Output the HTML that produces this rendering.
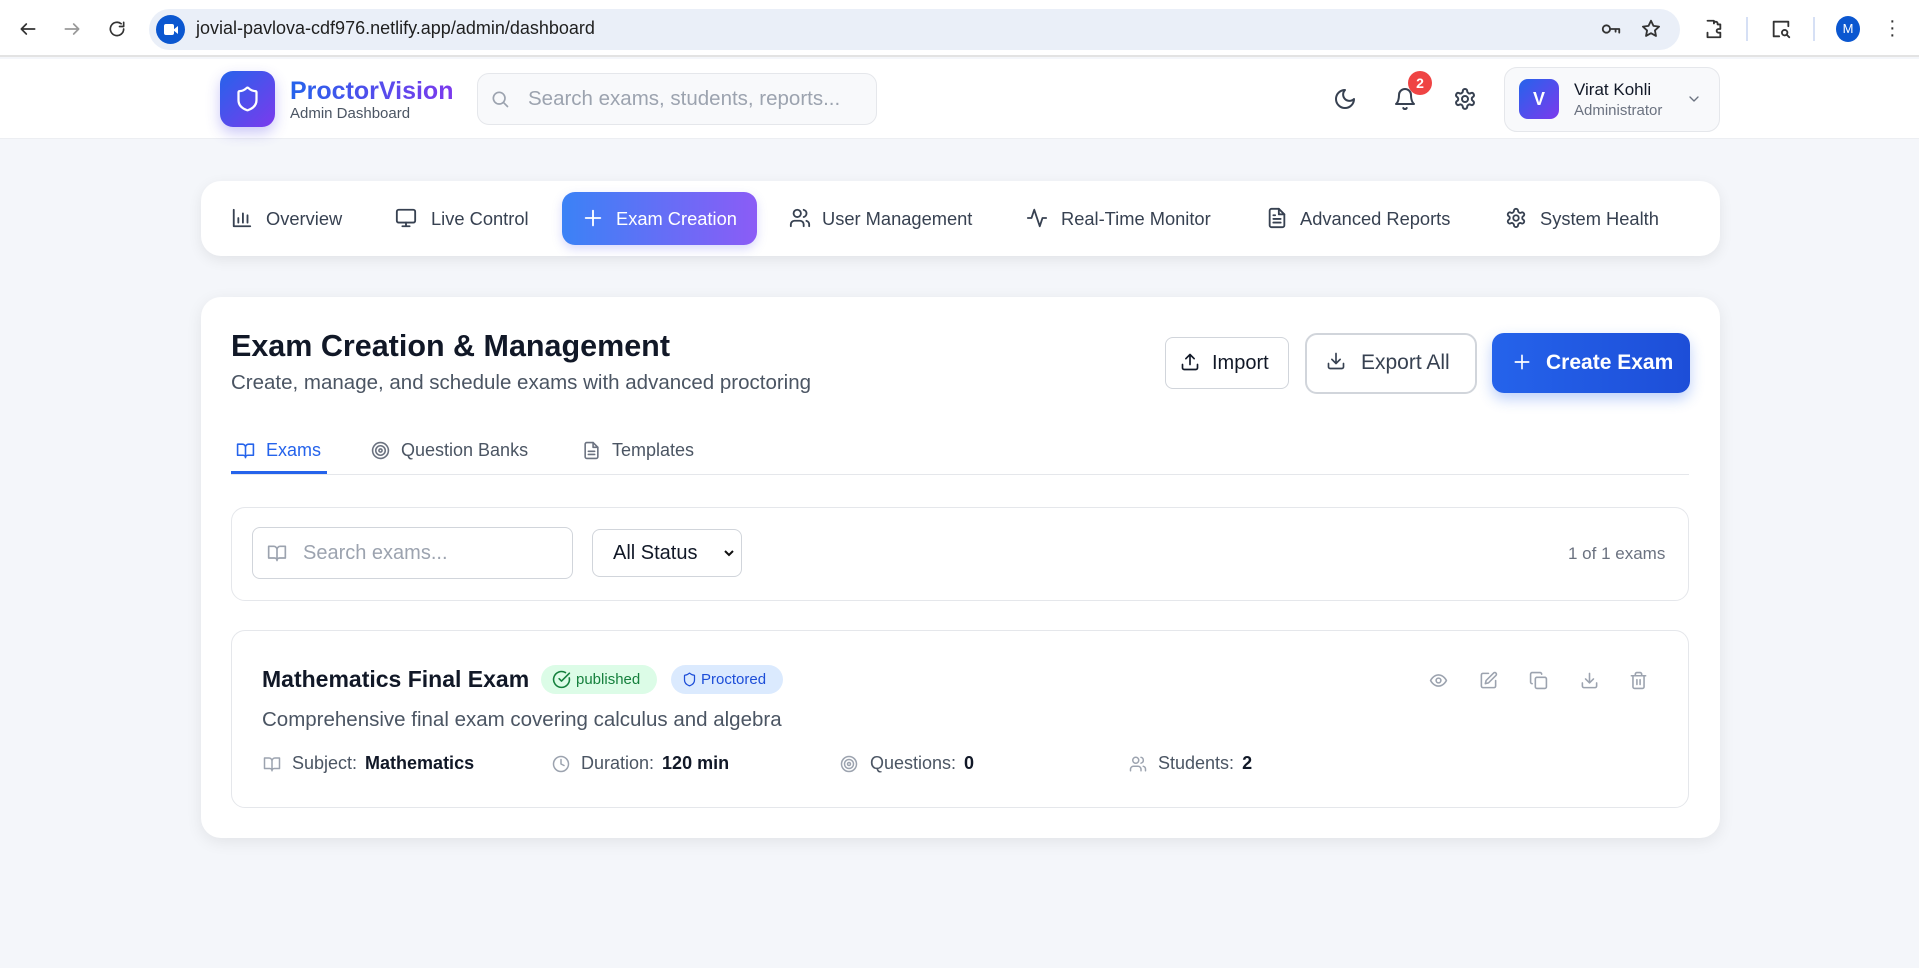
<!DOCTYPE html>
<html><head><meta charset="utf-8"><style>
*{box-sizing:border-box;margin:0;padding:0}
body{width:1919px;height:968px;overflow:hidden;background:#f4f6fa;font-family:"Liberation Sans",sans-serif;position:relative;color:#111827}
.a{position:absolute}
svg{display:block}
.ic{fill:none;stroke:currentColor;stroke-width:2;stroke-linecap:round;stroke-linejoin:round}
.nav span{position:absolute;font-size:18.3px;color:#374151;top:208px}
.nav svg{position:absolute;top:207px;color:#374151}
.meta{position:absolute;top:753px;font-size:18px;color:#4b5563}
.meta b{font-weight:bold;color:#111827;margin-left:8px}
</style></head><body>
<!-- chrome -->
<div class="a" style="left:0;top:0;width:1919px;height:57px;background:#fff;border-bottom:2px solid #e3e3e3"></div>
<svg class="a ic" style="left:18px;top:19px;color:#333" width="20" height="20" viewBox="0 0 24 24"><path d="M20 12H4M10 6l-6 6 6 6"/></svg>
<svg class="a ic" style="left:62px;top:19px;color:#999" width="20" height="20" viewBox="0 0 24 24"><path d="M4 12h16M14 6l6 6-6 6"/></svg>
<svg class="a ic" style="left:107px;top:19px;color:#333" width="20" height="20" viewBox="0 0 24 24"><path d="M20 12a8 8 0 1 1-3-6.3M20 4v5h-5"/></svg>
<div class="a" style="left:149px;top:9px;width:1531px;height:41px;border-radius:21px;background:#eaeff8"></div>
<div class="a" style="left:156px;top:15px;width:29px;height:29px;border-radius:50%;background:#0b57d0"></div>
<div class="a" style="left:164px;top:24px;width:10px;height:11px;background:#fff;border-radius:2px"></div>
<div class="a" style="left:173px;top:26px;width:0;height:0;border-top:4px solid transparent;border-bottom:4px solid transparent;border-right:5px solid #fff"></div>
<div class="a" style="left:196px;top:18px;font-size:18px;color:#1f1f1f">jovial-pavlova-cdf976.netlify.app/admin/dashboard</div>
<svg class="a ic" style="left:1600px;top:18px;color:#333" width="22" height="22" viewBox="0 0 24 24"><circle cx="7" cy="12" r="4"/><path d="M11 12h10v4M17 12v3"/></svg>
<svg class="a ic" style="left:1640px;top:18px;color:#333" width="22" height="22" viewBox="0 0 24 24"><path d="M12 3l2.7 5.6 6.1.8-4.5 4.2 1.1 6-5.4-3-5.4 3 1.1-6L3.2 9.4l6.1-.8z"/></svg>
<svg class="a ic" style="left:1702px;top:17px;color:#333" width="22" height="24" viewBox="0 0 24 24"><path d="M6 3h7v3a2 2 0 0 1 4 0v1h3v5h-2a2 2 0 0 0 0 4h2v5H6v-5"/></svg>
<div class="a" style="left:1746px;top:17px;width:2px;height:24px;background:#d6e0f5"></div>
<svg class="a ic" style="left:1770px;top:17px;color:#333" width="22" height="24" viewBox="0 0 24 24"><path d="M20 9V4H4v16h6"/><circle cx="16" cy="16" r="3"/><path d="M18 18l3 3"/></svg>
<div class="a" style="left:1813px;top:17px;width:2px;height:24px;background:#d6e0f5"></div>
<div class="a" style="left:1836px;top:16px;width:24px;height:26px;border-radius:50%;background:#0b57d0;color:#fff;font-size:13px;text-align:center;line-height:26px">M</div>
<div class="a" style="left:1889px;top:18px;width:4px;line-height:7px;font-size:20px;color:#333">·<br>·<br>·</div>
<!-- header -->
<div class="a" style="left:0;top:59px;width:1919px;height:80px;background:#fff;border-bottom:1px solid #eceef2"></div>
<div class="a" style="left:220px;top:71px;width:55px;height:56px;border-radius:13px;background:linear-gradient(135deg,#2563eb,#7c3aed);box-shadow:0 6px 14px rgba(79,70,229,.3)"></div>
<svg class="a ic" style="left:234px;top:85px;color:#fff" width="27" height="28" viewBox="0 0 24 24"><path d="M20 13c0 5-3.5 7.5-7.7 9a1 1 0 0 1-.6 0C7.5 20.5 4 18 4 13V6a1 1 0 0 1 1-1c2 0 4.5-1.2 6.2-2.7a1.2 1.2 0 0 1 1.6 0C14.5 3.8 17 5 19 5a1 1 0 0 1 1 1z"/></svg>
<div class="a" style="left:290px;top:77px;font-size:25px;font-weight:bold;background:linear-gradient(90deg,#2563eb,#7c3aed);-webkit-background-clip:text;color:transparent">ProctorVision</div>
<div class="a" style="left:290px;top:105px;font-size:15px;color:#4b5563">Admin Dashboard</div>
<div class="a" style="left:477px;top:73px;width:400px;height:52px;border-radius:12px;background:#f8f9fb;border:1px solid #e5e7eb"></div>
<svg class="a ic" style="left:490px;top:89px;color:#9ca3af" width="20" height="20" viewBox="0 0 24 24"><circle cx="11" cy="11" r="7"/><path d="M21 21l-4.3-4.3"/></svg>
<div class="a" style="left:528px;top:87px;font-size:20.5px;color:#9ca3af">Search exams, students, reports...</div>
<svg class="a ic" style="left:1333px;top:87px;color:#374151" width="24" height="24" viewBox="0 0 24 24"><path d="M12 3a6 6 0 0 0 9 9 9 9 0 1 1-9-9z"/></svg>
<svg class="a ic" style="left:1393px;top:87px;color:#374151" width="24" height="24" viewBox="0 0 24 24"><path d="M6 8a6 6 0 0 1 12 0c0 7 3 9 3 9H3s3-2 3-9M10.3 21a1.9 1.9 0 0 0 3.4 0"/></svg>
<div class="a" style="left:1408px;top:71px;width:24px;height:24px;border-radius:50%;background:#ef4444;color:#fff;font-size:14px;font-weight:bold;text-align:center;line-height:24px">2</div>
<svg class="a ic" style="left:1453px;top:87px;color:#374151" width="24" height="24" viewBox="0 0 24 24"><path d="M12.2 2h-.4a2 2 0 0 0-2 2v.2a2 2 0 0 1-1 1.7l-.4.3a2 2 0 0 1-2 0l-.2-.1a2 2 0 0 0-2.7.7l-.2.4a2 2 0 0 0 .7 2.7l.2.1a2 2 0 0 1 1 1.7v.5a2 2 0 0 1-1 1.7l-.2.1a2 2 0 0 0-.7 2.7l.2.4a2 2 0 0 0 2.7.7l.2-.1a2 2 0 0 1 2 0l.4.3a2 2 0 0 1 1 1.7v.2a2 2 0 0 0 2 2h.4a2 2 0 0 0 2-2v-.2a2 2 0 0 1 1-1.7l.4-.3a2 2 0 0 1 2 0l.2.1a2 2 0 0 0 2.7-.7l.2-.4a2 2 0 0 0-.7-2.7l-.2-.1a2 2 0 0 1-1-1.7v-.5a2 2 0 0 1 1-1.7l.2-.1a2 2 0 0 0 .7-2.7l-.2-.4a2 2 0 0 0-2.7-.7l-.2.1a2 2 0 0 1-2 0l-.4-.3a2 2 0 0 1-1-1.7V4a2 2 0 0 0-2-2z"/><circle cx="12" cy="12" r="3"/></svg>
<div class="a" style="left:1504px;top:67px;width:216px;height:65px;border-radius:13px;background:#f8f9fb;border:1px solid #e5e7eb"></div>
<div class="a" style="left:1519px;top:79px;width:40px;height:40px;border-radius:9px;background:linear-gradient(135deg,#2563eb,#7c3aed);color:#fff;font-weight:bold;font-size:18px;text-align:center;line-height:40px">V</div>
<div class="a" style="left:1574px;top:80px;font-size:17px;color:#111827">Virat Kohli</div>
<div class="a" style="left:1574px;top:102px;font-size:15px;color:#6b7280">Administrator</div>
<svg class="a ic" style="left:1686px;top:91px;color:#6b7280" width="16" height="16" viewBox="0 0 24 24"><path d="M6 9l6 6 6-6"/></svg>
<!-- nav -->
<div class="a" style="left:201px;top:181px;width:1519px;height:75px;border-radius:20px;background:#fff;box-shadow:0 4px 14px rgba(0,0,0,.08)"></div>
<div class="a" style="left:562px;top:192px;width:195px;height:53px;border-radius:13px;background:linear-gradient(90deg,#3b82f6,#8b5cf6);box-shadow:0 4px 10px rgba(99,102,241,.25)"></div>
<div class="nav">
<svg class="ic" style="left:231px" width="22" height="22" viewBox="0 0 24 24"><path d="M3 3v18h18M8 17v-5M13 17V7M18 17v-8"/></svg><span style="left:266px">Overview</span>
<svg class="ic" style="left:395px" width="22" height="22" viewBox="0 0 24 24"><rect x="2" y="3" width="20" height="14" rx="2"/><path d="M8 21h8M12 17v4"/></svg><span style="left:431px">Live Control</span>
<svg class="ic" style="left:582px;color:#fff" width="22" height="22" viewBox="0 0 24 24"><path d="M12 4v16M4 12h16"/></svg><span style="left:616px;color:#fff">Exam Creation</span>
<svg class="ic" style="left:789px" width="22" height="22" viewBox="0 0 24 24"><path d="M16 21v-2a4 4 0 0 0-4-4H6a4 4 0 0 0-4 4v2"/><circle cx="9" cy="7" r="4"/><path d="M22 21v-2a4 4 0 0 0-3-3.9M16 3.1a4 4 0 0 1 0 7.8"/></svg><span style="left:822px">User Management</span>
<svg class="ic" style="left:1026px" width="22" height="22" viewBox="0 0 24 24"><path d="M22 12h-4l-3 9L9 3l-3 9H2"/></svg><span style="left:1061px">Real-Time Monitor</span>
<svg class="ic" style="left:1266px" width="22" height="22" viewBox="0 0 24 24"><path d="M14 2H6a2 2 0 0 0-2 2v16a2 2 0 0 0 2 2h12a2 2 0 0 0 2-2V8z"/><path d="M14 2v6h6M16 13H8M16 17H8M10 9H8"/></svg><span style="left:1300px">Advanced Reports</span>
<svg class="ic" style="left:1505px" width="22" height="22" viewBox="0 0 24 24"><path d="M12.2 2h-.4a2 2 0 0 0-2 2v.2a2 2 0 0 1-1 1.7l-.4.3a2 2 0 0 1-2 0l-.2-.1a2 2 0 0 0-2.7.7l-.2.4a2 2 0 0 0 .7 2.7l.2.1a2 2 0 0 1 1 1.7v.5a2 2 0 0 1-1 1.7l-.2.1a2 2 0 0 0-.7 2.7l.2.4a2 2 0 0 0 2.7.7l.2-.1a2 2 0 0 1 2 0l.4.3a2 2 0 0 1 1 1.7v.2a2 2 0 0 0 2 2h.4a2 2 0 0 0 2-2v-.2a2 2 0 0 1 1-1.7l.4-.3a2 2 0 0 1 2 0l.2.1a2 2 0 0 0 2.7-.7l.2-.4a2 2 0 0 0-.7-2.7l-.2-.1a2 2 0 0 1-1-1.7v-.5a2 2 0 0 1 1-1.7l.2-.1a2 2 0 0 0 .7-2.7l-.2-.4a2 2 0 0 0-2.7-.7l-.2.1a2 2 0 0 1-2 0l-.4-.3a2 2 0 0 1-1-1.7V4a2 2 0 0 0-2-2z"/><circle cx="12" cy="12" r="3"/></svg><span style="left:1540px">System Health</span>
</div>
<!-- main card -->
<div class="a" style="left:201px;top:297px;width:1519px;height:541px;border-radius:20px;background:#fff;box-shadow:0 4px 16px rgba(0,0,0,.08)"></div>
<div class="a" style="left:231px;top:329px;font-size:30.5px;font-weight:bold;color:#111827">Exam Creation &amp; Management</div>
<div class="a" style="left:231px;top:371px;font-size:20.5px;color:#4b5563">Create, manage, and schedule exams with advanced proctoring</div>
<div class="a" style="left:1165px;top:337px;width:124px;height:52px;border-radius:8px;border:1px solid #d1d5db;background:#fff"></div>
<svg class="a ic" style="left:1180px;top:352px;color:#111827" width="20" height="20" viewBox="0 0 24 24"><path d="M21 15v4a2 2 0 0 1-2 2H5a2 2 0 0 1-2-2v-4M17 8l-5-5-5 5M12 3v12"/></svg>
<div class="a" style="left:1212px;top:352px;font-size:20px;color:#111827">Import</div>
<div class="a" style="left:1305px;top:333px;width:172px;height:61px;border-radius:12px;border:2px solid #d1d5db;background:#fff"></div>
<svg class="a ic" style="left:1326px;top:351px;color:#374151" width="20" height="20" viewBox="0 0 24 24"><path d="M21 15v4a2 2 0 0 1-2 2H5a2 2 0 0 1-2-2v-4M7 10l5 5 5-5M12 15V3"/></svg>
<div class="a" style="left:1361px;top:351px;font-size:21px;color:#374151">Export All</div>
<div class="a" style="left:1492px;top:333px;width:198px;height:60px;border-radius:12px;background:linear-gradient(90deg,#2563eb,#1d4ed8);box-shadow:0 6px 14px rgba(37,99,235,.3)"></div>
<svg class="a ic" style="left:1512px;top:352px;color:#fff" width="20" height="20" viewBox="0 0 24 24"><path d="M12 4v16M4 12h16"/></svg>
<div class="a" style="left:1546px;top:351px;font-size:21px;font-weight:bold;color:#fff">Create Exam</div>
<!-- tabs -->
<div class="a" style="left:231px;top:474px;width:1458px;height:1px;background:#e5e7eb"></div>
<div class="a" style="left:231px;top:471px;width:96px;height:3px;background:#2563eb"></div>
<svg class="a ic" style="left:236px;top:441px;color:#2563eb" width="19" height="19" viewBox="0 0 24 24"><path d="M2 4h6a4 4 0 0 1 4 4v13a3 3 0 0 0-3-3H2zM22 4h-6a4 4 0 0 0-4 4v13a3 3 0 0 1 3-3h7z"/></svg>
<div class="a" style="left:266px;top:440px;font-size:18px;color:#2563eb">Exams</div>
<svg class="a ic" style="left:371px;top:441px;color:#6b7280" width="19" height="19" viewBox="0 0 24 24"><circle cx="12" cy="12" r="10"/><circle cx="12" cy="12" r="6"/><circle cx="12" cy="12" r="2"/></svg>
<div class="a" style="left:401px;top:440px;font-size:18px;color:#4b5563">Question Banks</div>
<svg class="a ic" style="left:582px;top:441px;color:#6b7280" width="19" height="19" viewBox="0 0 24 24"><path d="M14 2H6a2 2 0 0 0-2 2v16a2 2 0 0 0 2 2h12a2 2 0 0 0 2-2V8z"/><path d="M14 2v6h6M16 13H8M16 17H8"/></svg>
<div class="a" style="left:612px;top:440px;font-size:18px;color:#4b5563">Templates</div>
<!-- filter -->
<div class="a" style="left:231px;top:507px;width:1458px;height:94px;border-radius:14px;border:1px solid #e5e7eb;background:#fff"></div>
<div class="a" style="left:252px;top:527px;width:321px;height:52px;border-radius:8px;border:1px solid #d1d5db"></div>
<svg class="a ic" style="left:267px;top:543px;color:#9ca3af" width="20" height="20" viewBox="0 0 24 24"><path d="M2 4h6a4 4 0 0 1 4 4v13a3 3 0 0 0-3-3H2zM22 4h-6a4 4 0 0 0-4 4v13a3 3 0 0 1 3-3h7z"/></svg>
<div class="a" style="left:303px;top:542px;font-size:20px;color:#9ca3af">Search exams...</div>
<div class="a" style="left:592px;top:529px;width:150px;height:48px;border-radius:8px;border:1px solid #d1d5db"></div>
<div class="a" style="left:613px;top:542px;font-size:20px;color:#111827">All Status</div>
<svg class="a" style="left:723px;top:548px" width="12" height="10" viewBox="0 0 12 10"><path d="M2 3l4 4 4-4" fill="none" stroke="#111" stroke-width="2"/></svg>
<div class="a" style="left:1568px;top:544px;font-size:17px;color:#6b7280">1 of 1 exams</div>
<!-- exam card -->
<div class="a" style="left:231px;top:630px;width:1458px;height:178px;border-radius:14px;border:1px solid #e5e7eb;background:#fff"></div>
<div class="a" style="left:262px;top:666px;font-size:23px;font-weight:bold;color:#111827">Mathematics Final Exam</div>
<div class="a" style="left:541px;top:665px;width:116px;height:29px;border-radius:15px;background:#dcfce7"></div>
<svg class="a ic" style="left:552px;top:670px;color:#15803d" width="19" height="19" viewBox="0 0 24 24"><path d="M21.8 10A10 10 0 1 1 17 3.3"/><path d="M9 11l3 3L22 4"/></svg>
<div class="a" style="left:576px;top:671px;font-size:15px;color:#15803d">published</div>
<div class="a" style="left:671px;top:665px;width:112px;height:29px;border-radius:15px;background:#dbeafe"></div>
<svg class="a ic" style="left:682px;top:672px;color:#1d4ed8" width="15" height="15" viewBox="0 0 24 24"><path d="M20 13c0 5-3.5 7.5-7.7 9a1 1 0 0 1-.6 0C7.5 20.5 4 18 4 13V6a1 1 0 0 1 1-1c2 0 4.5-1.2 6.2-2.7a1.2 1.2 0 0 1 1.6 0C14.5 3.8 17 5 19 5a1 1 0 0 1 1 1z"/></svg>
<div class="a" style="left:701px;top:671px;font-size:15px;color:#1d4ed8">Proctored</div>
<div class="a" style="left:262px;top:708px;font-size:20.5px;color:#4b5563">Comprehensive final exam covering calculus and algebra</div>
<svg class="a ic" style="left:263px;top:755px;color:#9ca3af" width="18" height="18" viewBox="0 0 24 24"><path d="M2 4h6a4 4 0 0 1 4 4v13a3 3 0 0 0-3-3H2zM22 4h-6a4 4 0 0 0-4 4v13a3 3 0 0 1 3-3h7z"/></svg>
<div class="meta" style="left:292px">Subject:<b>Mathematics</b></div>
<svg class="a ic" style="left:552px;top:755px;color:#9ca3af" width="18" height="18" viewBox="0 0 24 24"><circle cx="12" cy="12" r="10"/><path d="M12 6v6l4 2"/></svg>
<div class="meta" style="left:581px">Duration:<b>120 min</b></div>
<svg class="a ic" style="left:840px;top:755px;color:#9ca3af" width="18" height="18" viewBox="0 0 24 24"><circle cx="12" cy="12" r="10"/><circle cx="12" cy="12" r="6"/><circle cx="12" cy="12" r="2"/></svg>
<div class="meta" style="left:870px">Questions:<b>0</b></div>
<svg class="a ic" style="left:1129px;top:755px;color:#9ca3af" width="18" height="18" viewBox="0 0 24 24"><path d="M16 21v-2a4 4 0 0 0-4-4H6a4 4 0 0 0-4 4v2"/><circle cx="9" cy="7" r="4"/><path d="M22 21v-2a4 4 0 0 0-3-3.9M16 3.1a4 4 0 0 1 0 7.8"/></svg>
<div class="meta" style="left:1158px">Students:<b>2</b></div>
<svg class="a ic" style="left:1429px;top:671px;color:#9ca3af" width="19" height="19" viewBox="0 0 24 24"><path d="M2 12s3.5-7 10-7 10 7 10 7-3.5 7-10 7S2 12 2 12z"/><circle cx="12" cy="12" r="3"/></svg>
<svg class="a ic" style="left:1479px;top:671px;color:#9ca3af" width="19" height="19" viewBox="0 0 24 24"><path d="M12 3H5a2 2 0 0 0-2 2v14a2 2 0 0 0 2 2h14a2 2 0 0 0 2-2v-7"/><path d="M18.4 2.6a2.1 2.1 0 0 1 3 3L12 15l-4 1 1-4z"/></svg>
<svg class="a ic" style="left:1529px;top:671px;color:#9ca3af" width="19" height="19" viewBox="0 0 24 24"><rect x="8" y="8" width="14" height="14" rx="2"/><path d="M4 16a2 2 0 0 1-2-2V4a2 2 0 0 1 2-2h10a2 2 0 0 1 2 2"/></svg>
<svg class="a ic" style="left:1580px;top:671px;color:#9ca3af" width="19" height="19" viewBox="0 0 24 24"><path d="M21 15v4a2 2 0 0 1-2 2H5a2 2 0 0 1-2-2v-4M7 10l5 5 5-5M12 15V3"/></svg>
<svg class="a ic" style="left:1629px;top:671px;color:#9ca3af" width="19" height="19" viewBox="0 0 24 24"><path d="M3 6h18M19 6v14a2 2 0 0 1-2 2H7a2 2 0 0 1-2-2V6M8 6V4a2 2 0 0 1 2-2h4a2 2 0 0 1 2 2v2M10 11v6M14 11v6"/></svg>
</body></html>
